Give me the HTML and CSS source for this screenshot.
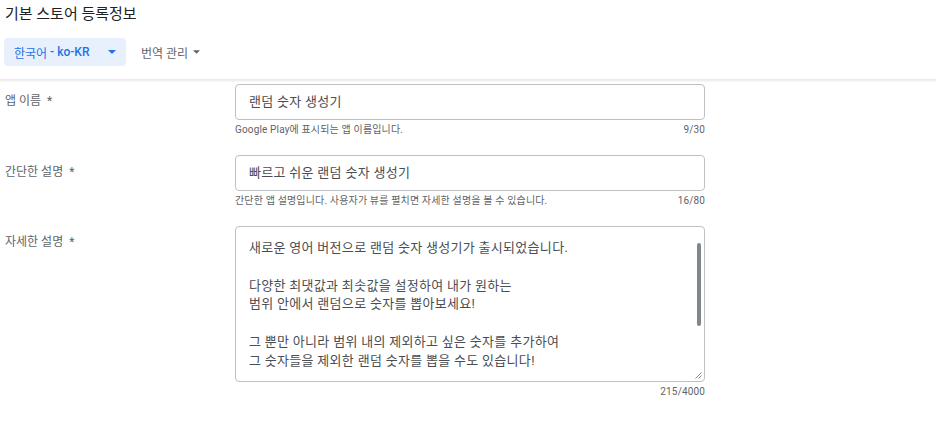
FILE: index.html
```html
<!DOCTYPE html>
<html lang="ko">
<head>
  <meta charset="UTF-8">
  <title>기본 스토어 등록정보</title>
  <link rel="stylesheet" href="styles.css">
</head>
<body>
  <h1 class="page-title">기본 스토어 등록정보</h1>

  <div class="lang-bar">
    <button class="lang-tab"><span class="lang-name">한국어</span>&nbsp;- ko-KR
      <svg class="caret" width="8" height="4" viewBox="0 0 10 5"><path d="M0 0h10L5 5z" fill="#1a73e8"/></svg>
    </button>
    <button class="lang-menu">번역 관리
      <svg class="caret" width="7" height="4" viewBox="0 0 10 5"><path d="M0 0h10L5 5z" fill="#5f6368"/></svg>
    </button>
  </div>

  <div class="divider"></div>

  <form class="listing">
    <div class="row">
      <label class="label" for="appName">앱 이름 &nbsp;*</label>
      <div class="field">
        <div class="box single" id="appName">랜덤 숫자 생성기</div>
        <div class="hint"><span>Google Play에 표시되는 앱 이름입니다.</span><span>9/30</span></div>
      </div>
    </div>

    <div class="row">
      <label class="label" for="shortDesc">간단한 설명 &nbsp;*</label>
      <div class="field">
        <div class="box single" id="shortDesc">빠르고 쉬운 랜덤 숫자 생성기</div>
        <div class="hint"><span>간단한 앱 설명입니다. 사용자가 뷰를 펼치면 자세한 설명을 볼 수 있습니다.</span><span>16/80</span></div>
      </div>
    </div>

    <div class="row">
      <label class="label label-top" for="fullDesc">자세한 설명 &nbsp;*</label>
      <div class="field">
        <div class="box multi" id="fullDesc">
          <p>새로운 영어 버전으로 랜덤 숫자 생성기가 출시되었습니다.</p>
          <p>&nbsp;</p>
          <p>다양한 최댓값과 최솟값을 설정하여 내가 원하는</p>
          <p>범위 안에서 랜덤으로 숫자를 뽑아보세요!</p>
          <p>&nbsp;</p>
          <p>그 뿐만 아니라 범위 내의 제외하고 싶은 숫자를 추가하여</p>
          <p>그 숫자들을 제외한 랜덤 숫자를 뽑을 수도 있습니다!</p>
          <span class="thumb"></span>
          <svg class="grip" width="7" height="7" viewBox="0 0 7 7"><path d="M6.5 0.5L0.5 6.5M6.5 3.5L3.5 6.5" stroke="#80868b" stroke-width="1"/></svg>
        </div>
        <div class="hint"><span></span><span>215/4000</span></div>
      </div>
    </div>
  </form>
</body>
</html>
```

FILE: styles.css
```css
body {
  margin: 0;
  padding: 0 0 0 5px;
  background: white;
  color: #3c4043;
  font-family: Roboto, "Noto Sans CJK KR", sans-serif;
}
.page-title {
  margin: 0;
  padding-top: 5px;
  font-size: 15px;
  font-weight: 400;
  line-height: 19px;
  color: #202124;
}
.lang-bar {
  display: flex;
  align-items: center;
  margin: 14px 0 0 -1px;
  height: 28px;
}
.lang-tab, .lang-menu {
  display: flex;
  align-items: center;
  border: 0;
  font-family: inherit;
  font-size: 12px;
  padding: 0;
  height: 28px;
  cursor: pointer;
}
.lang-tab {
  background: #e8f0fe;
  color: #1a73e8;
  font-weight: 500;
  border-radius: 4px;
  padding: 0 10px 0 10px;
  width: 122px;
}
.lang-name {
  font-weight: 400;
}
.lang-tab .caret {
  margin: 0 0 0 auto;
  position: relative;
  right: 0;
}
.lang-menu {
  background: none;
  color: #5f6368;
  margin-left: 15px;
}
.lang-menu .caret {
  margin-left: 5px;
}
.divider {
  margin: 13px 0 0 -5px;
  height: 1px;
  background: #e8eaed;
  box-shadow: 0 1px 2px rgba(60, 64, 67, 0.18);
}
.listing {
  margin-top: 4px;
}
.row {
  display: grid;
  grid-template-columns: 230px 470px;
  margin-bottom: 19px;
}
.label {
  font-size: 12px;
  color: #5f6368;
  align-self: start;
  padding-top: 9px;
  line-height: 17px;
}
.label-top {
  padding-top: 8px;
}
.box {
  box-sizing: border-box;
  border: 1px solid #bdc1c6;
  border-radius: 4px;
  padding: 0 13px;
  font-size: 13px;
  letter-spacing: 0.3px;
  color: #4a4d51;
}
.single {
  height: 36px;
  line-height: 34px;
}
.multi {
  position: relative;
  height: 156px;
  padding-top: 12px;
  line-height: 18.8px;
}
.multi p {
  margin: 0;
}
.thumb {
  position: absolute;
  right: 3px;
  top: 16px;
  width: 4px;
  height: 83px;
  border-radius: 2px;
  background: #80868b;
}
.grip {
  position: absolute;
  right: 2px;
  bottom: 2px;
}
.hint {
  display: flex;
  justify-content: space-between;
  font-size: 10px;
  letter-spacing: 0.15px;
  color: #5f6368;
  line-height: 13px;
  margin-top: 3px;
}
```
